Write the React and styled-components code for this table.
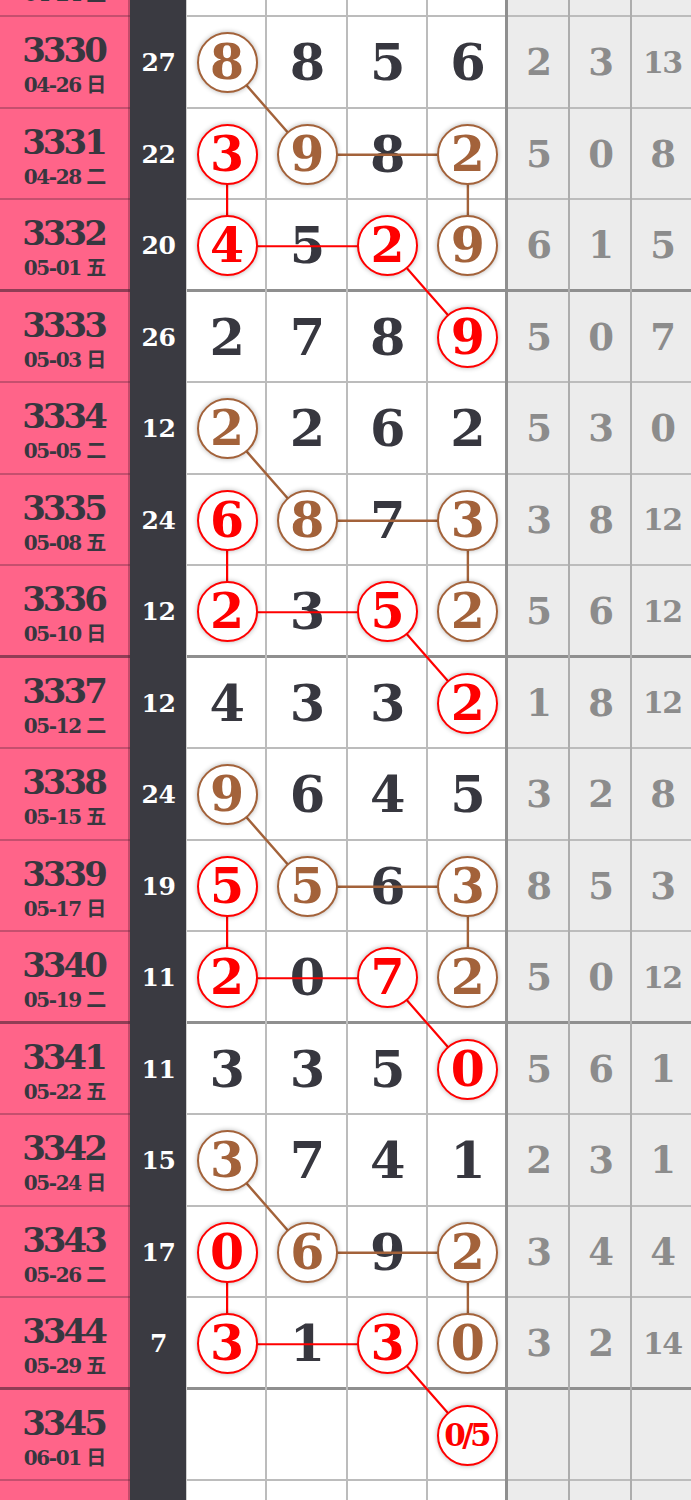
import React from 'react';
import styled, { createGlobalStyle } from 'styled-components';

const ROW_H = 91.5;
const NUM_W = 80.25;
const PINK = '#ff6489';
const DARK = '#3a3a41';
const INK = '#37373f';
const RED = '#ff0000';
const BROWN = '#a3623a';
const THIN = '#bcbcbc';
const THICK = '#8f8f8f';
const SERIF = '"DejaVu Serif", "Noto Sans CJK SC", serif';

const Global = createGlobalStyle`
  html, body { margin: 0; padding: 0; overflow: hidden; background: #fff; }
  body { width: 691px; height: 1500px; font-family: ${SERIF}; }
`;

const Board = styled.div`
  position: relative;
  width: 694px;
  margin-top: -74.5px;
`;

const Row = styled.div`
  display: grid;
  grid-template-columns: 130px 57px repeat(4, ${NUM_W}px) 62px 62px 62px;
  height: ${ROW_H}px;
`;

const lineShadow = (p, v) =>
  `box-shadow: ${v ? `${v},` : ''} inset 0 ${p.$end ? '-3px' : '-2px'} 0 ${p.$end ? THICK : THIN};`;

const PinkCell = styled.div`
  background: ${PINK};
  box-shadow: inset -2px 0 0 rgba(90, 30, 50, 0.35),
    inset 0 ${p => (p.$end ? '-3px' : '-2px')} 0 ${p => (p.$end ? 'rgba(70,35,50,0.6)' : 'rgba(90,40,60,0.35)')};
  display: flex;
  flex-direction: column;
  align-items: center;
  justify-content: center;
  gap: 8px;
  padding-top: 3px;
  box-sizing: border-box;
  color: ${INK};
  font-weight: bold;
`;

const Issue = styled.span`
  font-size: 34px;
  line-height: 1;
  letter-spacing: -3px;
  padding-right: 3px;
`;

const DateText = styled.span`
  font-size: 20px;
  line-height: 1;
  letter-spacing: -1.4px;
  padding-right: 1.4px;
  white-space: pre;
`;

const SumCell = styled.div`
  background: ${DARK};
  box-shadow: inset -1px 0 0 #cfcfcf;
  color: #fff;
  display: flex;
  align-items: center;
  justify-content: center;
  font: bold 25px/1 ${SERIF};
  letter-spacing: -0.5px;
`;

const NumCell = styled.div`
  background: #fff;
  ${p => lineShadow(p, `inset ${p.$last ? '-3px' : '-2px'} 0 0 ${p.$last ? THICK : THIN}`)}
  display: flex;
  align-items: center;
  justify-content: center;
  color: ${INK};
  font: bold 51px/1 ${SERIF};
`;

const GrayCell = styled.div`
  background: #ececec;
  ${p => lineShadow(p, `inset -2px 0 0 #adadad`)}
  display: flex;
  align-items: center;
  justify-content: center;
  color: #8c8c8c;
  font-weight: bold;
  font-family: ${SERIF};
  font-size: ${p => (p.$wide ? '30px' : '37px')};
  letter-spacing: ${p => (p.$wide ? '-1.5px' : '0')};
  padding-right: ${p => (p.$wide ? '1.5px' : '0')};
  line-height: 1;
`;

const Circle = styled.span`
  position: relative;
  z-index: 2;
  box-sizing: border-box;
  width: 61px;
  height: 61px;
  border-radius: 50%;
  border: 2px solid ${p => (p.$tone === 'red' ? RED : BROWN)};
  background: #fff;
  box-shadow: 0 0 5px rgba(0, 0, 0, 0.3);
  color: ${p => (p.$tone === 'red' ? RED : BROWN)};
  display: flex;
  align-items: center;
  justify-content: center;
  font-size: ${p => (p.$small ? '31px' : '49px')};
  letter-spacing: ${p => (p.$small ? '-3.5px' : '0')};
  padding-right: ${p => (p.$small ? '3.5px' : '0')};
  line-height: 1;
`;

const Links = styled.svg`
  position: absolute;
  top: 0;
  left: 187px;
  z-index: 1;
  pointer-events: none;
  overflow: visible;
`;

const raw = [
  [3329, '04-24', '五', '', ['', '', '', ''], ['', '', '']],
  [3330, '04-26', '日', '27', ['8', '8', '5', '6'], ['2', '3', '13']],
  [3331, '04-28', '二', '22', ['3', '9', '8', '2'], ['5', '0', '8']],
  [3332, '05-01', '五', '20', ['4', '5', '2', '9'], ['6', '1', '5']],
  [3333, '05-03', '日', '26', ['2', '7', '8', '9'], ['5', '0', '7']],
  [3334, '05-05', '二', '12', ['2', '2', '6', '2'], ['5', '3', '0']],
  [3335, '05-08', '五', '24', ['6', '8', '7', '3'], ['3', '8', '12']],
  [3336, '05-10', '日', '12', ['2', '3', '5', '2'], ['5', '6', '12']],
  [3337, '05-12', '二', '12', ['4', '3', '3', '2'], ['1', '8', '12']],
  [3338, '05-15', '五', '24', ['9', '6', '4', '5'], ['3', '2', '8']],
  [3339, '05-17', '日', '19', ['5', '5', '6', '3'], ['8', '5', '3']],
  [3340, '05-19', '二', '11', ['2', '0', '7', '2'], ['5', '0', '12']],
  [3341, '05-22', '五', '11', ['3', '3', '5', '0'], ['5', '6', '1']],
  [3342, '05-24', '日', '15', ['3', '7', '4', '1'], ['2', '3', '1']],
  [3343, '05-26', '二', '17', ['0', '6', '9', '2'], ['3', '4', '4']],
  [3344, '05-29', '五', '7', ['3', '1', '3', '0'], ['3', '2', '14']],
  [3345, '06-01', '日', '', ['', '', '', '0/5'], ['', '', '']],
  [null, '', '', '', ['', '', '', ''], ['', '', '']],
];

const FIRST = 3329;
const starts = [3330, 3334, 3338, 3342];
const marks = {};
const segs = [];
starts.forEach(a => {
  const brown = [[a, 0], [a + 1, 1], [a + 1, 3], [a + 2, 3]];
  const red = [[a + 1, 0], [a + 2, 0], [a + 2, 2], [a + 3, 3]];
  brown.forEach(([r, c]) => (marks[`${r}-${c}`] = 'brown'));
  red.forEach(([r, c]) => (marks[`${r}-${c}`] = 'red'));
  for (let i = 0; i < 3; i++) {
    segs.push({ tone: 'brown', from: brown[i], to: brown[i + 1] });
    segs.push({ tone: 'red', from: red[i], to: red[i + 1] });
  }
});

const cx = c => NUM_W * c + NUM_W / 2;
const cy = r => (r - FIRST) * ROW_H + ROW_H / 2;

export default function App() {
  const total = raw.length * ROW_H;
  return (
    <>
      <Global />
      <Board>
        {raw.map(([id, date, wd, sum, digits, gray], idx) => {
          const end = id !== null && (id - 3332) % 4 === 0;
          return (
            <Row key={idx}>
              <PinkCell $end={end}>
                {id !== null && (
                  <>
                    <Issue>{id}</Issue>
                    <DateText>{`${date} ${wd}`}</DateText>
                  </>
                )}
              </PinkCell>
              <SumCell>{sum}</SumCell>
              {digits.map((d, c) => {
                const tone = marks[`${id}-${c}`];
                return (
                  <NumCell key={c} $end={end} $last={c === 3}>
                    {tone && d ? (
                      <Circle $tone={tone} $small={d.length > 1}>{d}</Circle>
                    ) : (
                      d
                    )}
                  </NumCell>
                );
              })}
              {gray.map((g, c) => (
                <GrayCell key={c} $end={end} $wide={g.length > 1}>{g}</GrayCell>
              ))}
            </Row>
          );
        })}
        <Links width={NUM_W * 4} height={total} viewBox={`0 0 ${NUM_W * 4} ${total}`}>
          {segs.map((s, i) => (
            <line
              key={i}
              x1={cx(s.from[1])}
              y1={cy(s.from[0])}
              x2={cx(s.to[1])}
              y2={cy(s.to[0])}
              stroke={s.tone === 'red' ? RED : BROWN}
              strokeWidth={s.tone === 'red' ? 2.2 : 2.4}
            />
          ))}
        </Links>
      </Board>
    </>
  );
}
